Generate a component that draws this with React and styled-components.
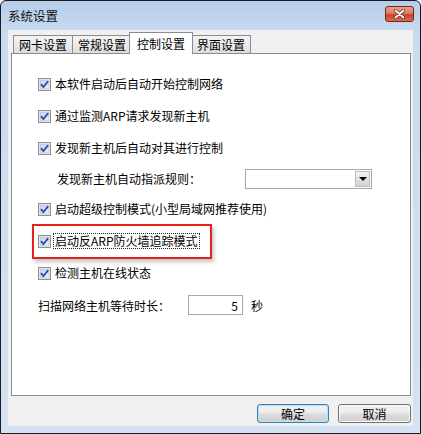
import styled, { createGlobalStyle, css } from "styled-components";

const GlobalStyle = createGlobalStyle`
  html, body {
    margin: 0;
    padding: 0;
    background: #fff;
  }
  * {
    box-sizing: border-box;
  }
`;

const FONT = `"Noto Sans CJK SC", "Liberation Sans", sans-serif`;

const Window = styled.div`
  width: 421px;
  height: 434px;
  display: flex;
  flex-direction: column;
  border: 1px solid #1c1c1c;
  border-radius: 6px 6px 0 0;
  background: linear-gradient(180deg, #b6cde9 0%, #c9dbf0 8%, #d4e2f3 100%);
  padding: 0 7px 7px 7px;
  font-family: ${FONT};
  font-size: 12px;
  color: #000;
`;

const TitleBar = styled.div`
  height: 29px;
  display: flex;
  align-items: center;
  justify-content: space-between;
`;

const Title = styled.div`
  font-size: 12.5px;
  line-height: 1;
  color: #111;
  padding-top: 1px;
`;

const CloseButton = styled.div`
  width: 29px;
  height: 16px;
  margin-top: -4px;
  margin-right: -1px;
  border: 1px solid #6e2a1e;
  border-radius: 3px;
  background: linear-gradient(180deg, #eba190 0%, #df7a63 45%, #c8432a 55%, #dc6c4f 100%);
  display: flex;
  align-items: center;
  justify-content: center;
`;

const Client = styled.div`
  flex: 1;
  display: flex;
  flex-direction: column;
  background: #f0f0f0;
  padding: 2px 2px 3px 3px;
`;

const TabStrip = styled.div`
  height: 21px;
  display: flex;
  align-items: flex-end;
  padding-left: 2px;
  position: relative;
  z-index: 1;
`;

const Tab = styled.div`
  height: 18px;
  padding: 0 5px;
  display: flex;
  align-items: center;
  border: 1px solid #898c95;
  border-bottom: none;
  margin-right: -1px;
  background: linear-gradient(180deg, #f3f3f3 0%, #ebebeb 50%, #dcdcdc 100%);
  white-space: nowrap;
  ${(p) =>
    p.$active &&
    css`
      height: 22px;
      margin: 0 -2px -1px -2px;
      padding: 0 7px 1px 7px;
      background: #fff;
      position: relative;
      z-index: 2;
    `}
`;

const Panel = styled.div`
  height: 343px;
  border: 1px solid #898c95;
  background: #fff;
  padding: 14px 0 0 26px;
  display: flex;
  flex-direction: column;
`;

const Row = styled.div`
  height: ${(p) => p.$h || 32}px;
  display: flex;
  align-items: center;
  padding-left: ${(p) => p.$indent || 0}px;
  white-space: nowrap;
`;

const CheckLabel = styled.span`
  margin-left: 3px;
  line-height: 14px;
  padding: 0 1px;
  ${(p) =>
    p.$focus &&
    css`
      outline: 1px dotted #222;
      outline-offset: 0;
    `}
`;

const Highlight = styled.div`
  height: 35px;
  width: 180px;
  margin-left: -6px;
  padding-left: 4px;
  border: 2px solid #e8201c;
  box-shadow: 2px 3px 4px rgba(80, 90, 80, 0.35);
  display: flex;
  align-items: center;
`;

const Combo = styled.div`
  width: 127px;
  height: 20px;
  margin-left: 44px;
  border: 1px solid #a3a8b0;
  background: #fff;
  display: flex;
  justify-content: flex-end;
  padding: 1px;
`;

const ComboArrow = styled.div`
  width: 15px;
  height: 100%;
  background: linear-gradient(180deg, #f4f4f4 0%, #e2e2e2 50%, #d2d2d2 100%);
  border: 1px solid #bdbdbd;
  display: flex;
  align-items: center;
  justify-content: center;
  &::after {
    content: "";
    border-left: 4px solid transparent;
    border-right: 4px solid transparent;
    border-top: 4px solid #000;
  }
`;

const NumberBox = styled.div`
  width: 55px;
  height: 20px;
  margin-left: 18px;
  border: 1px solid #a3a8b0;
  background: #fff;
  display: flex;
  align-items: center;
  justify-content: flex-end;
  padding-right: 4px;
`;

const Unit = styled.span`
  margin-left: 8px;
`;

const ButtonBar = styled.div`
  margin-top: 8px;
  display: flex;
  justify-content: flex-end;
  gap: 9px;
`;

const Button = styled.div`
  width: ${(p) => p.$w}px;
  height: 19px;
  border: 1px solid ${(p) => (p.$primary ? "#3c7fb1" : "#707070")};
  border-radius: 3px;
  background: linear-gradient(180deg, #f3f3f3 0%, #ebebeb 48%, #dddddd 52%, #cfcfcf 100%);
  box-shadow: ${(p) => (p.$primary ? "inset 0 0 0 1px #b7e0f7" : "inset 0 0 0 1px #fbfbfb")};
  display: flex;
  align-items: center;
  justify-content: center;
  line-height: 1;
`;

const CheckBox = () => (
  <svg width="13" height="13" viewBox="0 0 13 13">
    <defs>
      <linearGradient id="cbfill" x1="0" y1="0" x2="1" y2="1">
        <stop offset="0" stopColor="#c8d3e6" />
        <stop offset="1" stopColor="#eef2f8" />
      </linearGradient>
    </defs>
    <rect x="0.5" y="0.5" width="12" height="12" fill="#f6f6f6" stroke="#8e8f8f" />
    <rect x="2" y="2" width="9" height="9" fill="url(#cbfill)" stroke="#aeb8c8" strokeWidth="0.6" />
    <path d="M3 6.2 L5.4 9 L10.2 3.2" fill="none" stroke="#3050b0" strokeWidth="1.9" />
  </svg>
);

const CloseIcon = () => (
  <svg width="11" height="10" viewBox="0 0 11 10">
    <path d="M1.5 1.5 L9.5 8.5 M9.5 1.5 L1.5 8.5" stroke="#5a2a22" strokeWidth="3.2" strokeLinecap="round" />
    <path d="M1.5 1.5 L9.5 8.5 M9.5 1.5 L1.5 8.5" stroke="#fff" strokeWidth="1.8" strokeLinecap="round" />
  </svg>
);

const tabs = ["网卡设置", "常规设置", "控制设置", "界面设置"];

const App = () => {
  return (
    <>
      <GlobalStyle />
      <Window>
        <TitleBar>
          <Title>系统设置</Title>
          <CloseButton>
            <CloseIcon />
          </CloseButton>
        </TitleBar>
        <Client>
          <TabStrip>
            {tabs.map((t, i) => (
              <Tab key={t} $active={i === 2}>
                {t}
              </Tab>
            ))}
          </TabStrip>
          <Panel>
            <Row>
              <CheckBox />
              <CheckLabel>本软件启动后自动开始控制网络</CheckLabel>
            </Row>
            <Row>
              <CheckBox />
              <CheckLabel>通过监测ARP请求发现新主机</CheckLabel>
            </Row>
            <Row>
              <CheckBox />
              <CheckLabel>发现新主机后自动对其进行控制</CheckLabel>
            </Row>
            <Row $h={29} $indent={19}>
              发现新主机自动指派规则：
              <Combo>
                <ComboArrow />
              </Combo>
            </Row>
            <Row>
              <CheckBox />
              <CheckLabel>启动超级控制模式(小型局域网推荐使用)</CheckLabel>
            </Row>
            <Row>
              <Highlight>
                <CheckBox />
                <CheckLabel $focus>启动反ARP防火墙追踪模式</CheckLabel>
              </Highlight>
            </Row>
            <Row>
              <CheckBox />
              <CheckLabel>检测主机在线状态</CheckLabel>
            </Row>
            <Row>
              扫描网络主机等待时长：
              <NumberBox>5</NumberBox>
              <Unit>秒</Unit>
            </Row>
          </Panel>
          <ButtonBar>
            <Button $w={72} $primary>
              确定
            </Button>
            <Button $w={73}>取消</Button>
          </ButtonBar>
        </Client>
      </Window>
    </>
  );
};

export default App;
